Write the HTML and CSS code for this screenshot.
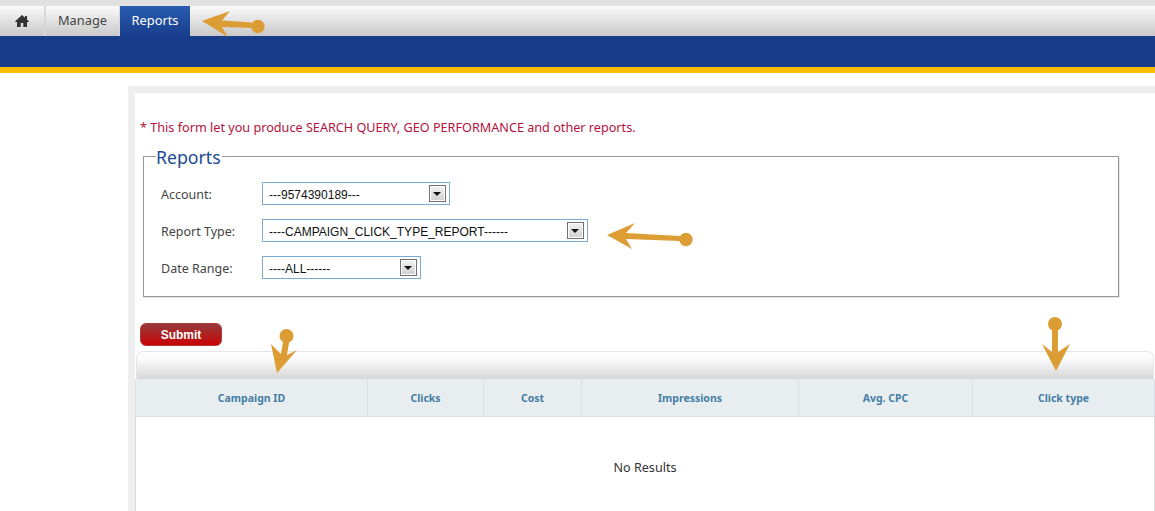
FILE: index.html
```html
<!DOCTYPE html>
<html lang="en">
<head>
<meta charset="utf-8">
<title>Reports</title>
<link rel="stylesheet" href="styles.css">
</head>
<body>
<header class="header">
  <nav class="nav">
    <a class="tab tab-home" aria-label="Home">
      <svg class="home-icon" viewBox="0 0 14 12" width="14" height="12"><path d="M7 0 10 2.700V1h2v3.500L14 6.400 13.600 7H12v5H8.300V8H5.700v4H2V7H.4L0 6.400z" fill="#333"/></svg>
    </a>
    <a class="tab">Manage</a>
    <a class="tab tab-active">Reports</a>
  </nav>
  <div class="band"></div>
</header>
<main class="panel">
  <p class="note">* This form let you produce SEARCH QUERY, GEO PERFORMANCE and other reports.</p>
  <fieldset class="box">
    <legend class="legend">Reports</legend>
    <div class="row">
      <span class="label">Account:</span>
      <div class="select select-account"><span class="select-text">---9574390189---</span><span class="select-btn"></span></div>
    </div>
    <div class="row">
      <span class="label">Report Type:</span>
      <div class="select select-type"><span class="select-text">----CAMPAIGN_CLICK_TYPE_REPORT------</span><span class="select-btn"></span></div>
    </div>
    <div class="row">
      <span class="label">Date Range:</span>
      <div class="select select-range"><span class="select-text">----ALL------</span><span class="select-btn"></span></div>
    </div>
  </fieldset>
  <button class="submit" type="button">Submit</button>
  <section class="grid">
    <div class="grid-cap"></div>
    <table class="table">
      <colgroup>
        <col class="c1"><col class="c2"><col class="c3"><col class="c4"><col class="c5"><col class="c6">
      </colgroup>
      <thead>
        <tr><th>Campaign ID</th><th>Clicks</th><th>Cost</th><th>Impressions</th><th>Avg. CPC</th><th>Click type</th></tr>
      </thead>
      <tbody>
        <tr><td colspan="6">No Results</td></tr>
      </tbody>
    </table>
  </section>
</main>
<svg class="arrows" width="1155" height="511" viewBox="0 0 1155 511">
  <g fill="#dd9d35">
    <path d="M202 21 230 11 222 20.500 252 22.500 252 28 222 27 228 37z"/>
    <circle cx="258" cy="26.500" r="6.700"/>
    <path d="M607 235 635 223 626 233 680 236 680 241 626 239 632 249z"/>
    <circle cx="686" cy="239.500" r="6.700"/>
    <path d="M277 373 271 344 281 354 284 336 290 337 287 355 297 350z"/>
    <circle cx="286.500" cy="336" r="7"/>
    <path d="M1056 371 1042 344 1052 352 1052 324 1058 324 1058 352 1070 344z"/>
    <circle cx="1055" cy="324" r="7"/>
  </g>
</svg>
</body>
</html>
```
FILE: styles.css
```css
html, body {
  margin: 0;
  height: 511px;
  overflow: hidden;
  background: #fff;
  font-family: "Noto Sans", "Open Sans", sans-serif;
  font-size: 12px;
  color: #333;
}
body { position: relative; }

.header { border-top: 6px solid #e1e1e1; }
.nav {
  display: flex;
  height: 30px;
  background: linear-gradient(#fafafa, #c9c9c9);
}
.tab {
  display: flex;
  align-items: center;
  justify-content: center;
  box-sizing: border-box;
  color: #444;
  font-size: 12.800px;
  padding: 0 12px 2px;
  border-right: 2px solid #d8d8d8;
  width: 75px;
}
.tab-home { width: 46px; padding-bottom: 1px; }
.home-icon { display: block; }
.tab-active {
  width: 70px;
  margin-left: -1px;
  color: #fff;
  border-right: 0;
  background: linear-gradient(#2a5cb0, #183e8c);
}
.band {
  height: 31px;
  background: #173c8a;
  border-bottom: 6px solid #fdbc00;
}

.panel {
  box-sizing: border-box;
  height: 438px;
  margin: 13px 0 0 128px;
  border-top: 7px solid #eee;
  border-left: 7px solid #eee;
  overflow: hidden;
}
.note {
  margin: 0;
  padding: 26px 0 0 5px;
  line-height: 16px;
  color: #b5123e;
  font-size: 12.650px;
}
.box {
  box-sizing: border-box;
  width: 976px;
  height: 153px;
  margin: 9px 0 0 8px;
  padding: 7px 0 0 17px;
  border: 1px solid #999;
  box-shadow: 1px 1px 0 #e6e6e6;
}
.legend {
  margin-left: -5px;
  padding: 2px 1px 0 0;
  font-size: 17.700px;
  line-height: 22px;
  color: #1b4a93;
}
.row {
  display: flex;
  align-items: center;
  height: 37px;
}
.label {
  width: 101px;
  padding-top: 2px;
  color: #444;
  font-size: 12.500px;
}
.select {
  display: flex;
  align-items: center;
  justify-content: space-between;
  box-sizing: border-box;
  height: 23px;
  border: 1px solid #7aa9d2;
  padding: 0 3px 0 6px;
  font-family: "Liberation Sans", Arial, sans-serif;
  font-size: 12px;
  color: #111;
}
.select-text { padding-top: 2px; }
.select-account { width: 188px; }
.select-type { width: 326px; }
.select-range { width: 159px; }
.select-btn {
  box-sizing: border-box;
  width: 17px;
  height: 17px;
  border: 1px solid #707070;
  background: linear-gradient(#f2f2f2, #cfcfcf);
  box-shadow: inset 0 0 0 1px #fff;
  position: relative;
}
.select-btn::after {
  content: "";
  position: absolute;
  left: 3px;
  top: 6px;
  border: 4px solid transparent;
  border-top: 4px solid #111;
  border-bottom: 0;
}
.submit {
  display: block;
  box-sizing: border-box;
  width: 82px;
  height: 23px;
  margin: 26px 0 0 5px;
  padding: 0;
  border: 1px solid #b23b3b;
  border-radius: 6px;
  background: linear-gradient(#963a3a, #c80404);
  color: #fff;
  font-family: "Liberation Sans", Arial, sans-serif;
  font-weight: bold;
  font-size: 12px;
}
.grid {
  margin: 5px 0 0 0;
}
.grid-cap {
  box-sizing: border-box;
  width: 1018px;
  height: 28px;
  margin-left: 1px;
  border: 1px solid #e6e6e6;
  border-bottom: 0;
  border-radius: 7px 7px 0 0;
  background: linear-gradient(#fff, #fbfbfb 25%, #d6d6d6);
}
.table {
  width: 1020px;
  table-layout: fixed;
  border-collapse: separate;
  border-spacing: 0;
}
.c1 { width: 233px; }
.c2 { width: 116px; }
.c3 { width: 98px; }
.c4 { width: 217px; }
.c5 { width: 174px; }
.c6 { width: 182px; }
.table th {
  height: 38px;
  box-sizing: border-box;
  padding: 0;
  background: #e8edf0;
  border-right: 1px solid #d9dfe2;
  border-bottom: 1px solid #d9dfe2;
  color: #447ea6;
  font-size: 10.500px;
  font-weight: bold;
  text-align: center;
}
.table th:first-child { border-left: 1px solid #d9dfe2; }
.table td {
  height: 100px;
  padding: 0;
  text-align: center;
  color: #333;
  font-size: 12.600px;
  border-left: 1px solid #dcdcdc;
  border-right: 1px solid #dcdcdc;
}

.arrows {
  position: absolute;
  left: 0;
  top: 0;
  pointer-events: none;
}
```
